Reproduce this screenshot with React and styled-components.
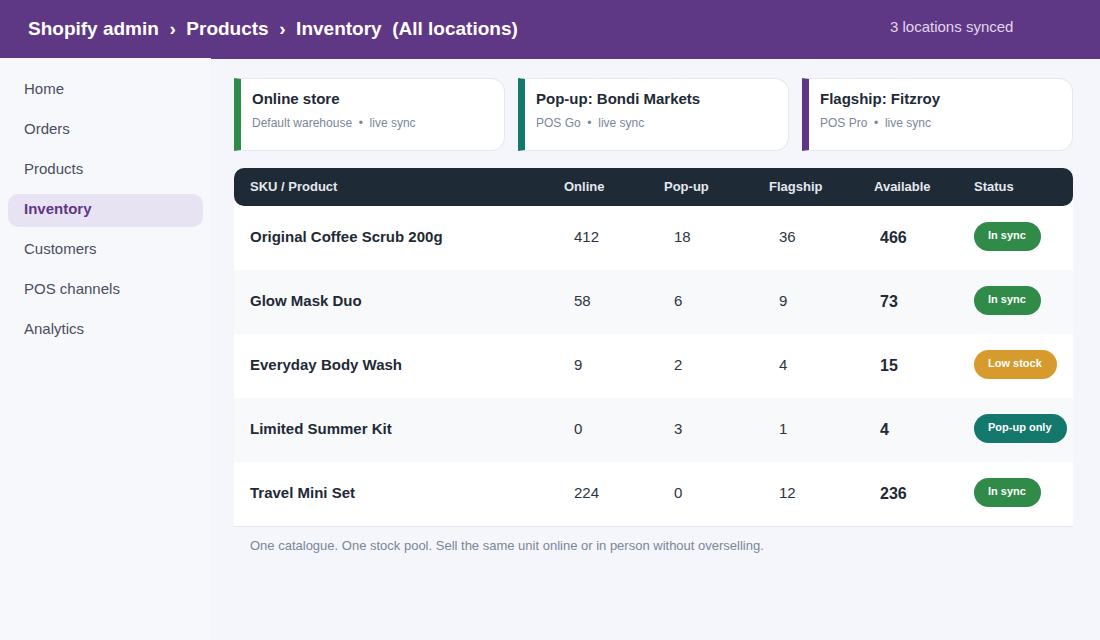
import React from 'react';
import styled, { createGlobalStyle } from 'styled-components';

const GlobalStyle = createGlobalStyle`
  html, body {
    margin: 0;
    padding: 0;
    background: #f4f6fb;
    font-family: "Liberation Sans", Arial, sans-serif;
  }
  * { box-sizing: border-box; }
`;

const Page = styled.div`
  width: 1100px;
  height: 640px;
  overflow: hidden;
  display: flex;
  flex-direction: column;
  background: #f4f6fb;
`;

const TopBar = styled.header`
  flex: 0 0 59px;
  display: flex;
  align-items: center;
  background: #5f3885;
  color: #fff;
  padding: 0 0 2px 28px;
`;

const Crumbs = styled.div`
  width: 862px;
  font-size: 19px;
  font-weight: 700;
  white-space: pre;
`;

const SyncNote = styled.div`
  font-size: 15px;
  color: #e0d6ec;
  margin-bottom: 5px;
`;

const Body = styled.div`
  flex: 1;
  display: flex;
  min-height: 0;
`;

const Sidebar = styled.nav`
  flex: 0 0 211px;
  margin-top: -1px;
  padding: 16px 8px 0;
  background: #f7f8fb;
  display: flex;
  flex-direction: column;
  gap: 7px;
`;

const NavItem = styled.div`
  height: 33px;
  line-height: 30px;
  padding-left: 16px;
  border-radius: 10px;
  font-size: 15px;
  font-weight: ${p => (p.$active ? 700 : 400)};
  color: ${p => (p.$active ? '#5f3885' : '#4a4e5e')};
  background: ${p => (p.$active ? '#e8e3f2' : 'transparent')};
`;

const Main = styled.main`
  flex: 1;
  padding: 19px 27px 0 23px;
`;

const Cards = styled.div`
  display: grid;
  grid-template-columns: repeat(3, 271px);
  gap: 13px;
  margin-bottom: 17px;
`;

const Card = styled.div`
  height: 73px;
  padding: 11px 11px 0 11px;
  background: #fff;
  border: 1px solid #e4e7ee;
  border-left: 7px solid ${p => p.$accent};
  border-radius: 0 14px 14px 0;
`;

const CardTitle = styled.div`
  font-size: 15px;
  font-weight: 700;
  line-height: 17px;
  color: #1e2a36;
`;

const CardSub = styled.div`
  margin-top: 8px;
  font-size: 12px;
  line-height: 16px;
  color: #7a8699;
  white-space: pre;
`;

const columns = '314px 100px 105px 105px 100px 1fr';

const Table = styled.div`
  background: #fff;
  border-radius: 10px 10px 0 0;
  border-bottom: 1px solid #e4e7ee;
`;

const TableHead = styled.div`
  display: grid;
  grid-template-columns: ${columns};
  align-items: center;
  height: 38px;
  padding: 0 0 2px 16px;
  background: #1e2a36;
  border-radius: 10px;
  font-size: 13px;
  font-weight: 700;
  color: #e4e8ef;
`;

const Row = styled.div`
  display: grid;
  grid-template-columns: ${columns};
  align-items: center;
  height: 64px;
  padding-left: 16px;
  background: ${p => (p.$striped ? '#f8f9fb' : '#fff')};
`;

const ProductName = styled.div`
  font-size: 15px;
  font-weight: 700;
  line-height: 17px;
  padding-bottom: 4px;
  color: #1e2a36;
`;

const Qty = styled.div`
  font-size: 15px;
  line-height: 17px;
  padding-bottom: 4px;
  color: #2b3440;
  padding-left: 10px;
`;

const Total = styled.div`
  font-size: 16px;
  font-weight: 700;
  color: #1e2a36;
  padding-left: 6px;
`;

const Badge = styled.span`
  justify-self: start;
  height: 29px;
  line-height: 27px;
  margin-top: -3px;
  padding: 0 15px 0 14px;
  border-radius: 15px;
  font-size: 11px;
  font-weight: 700;
  color: #fff;
  white-space: nowrap;
  background: ${p => p.$color};
`;

const Footnote = styled.p`
  margin: 11px 0 0 16px;
  font-size: 13px;
  color: #7a8699;
`;

const GREEN = '#2f8b47';
const TEAL = '#14786c';
const AMBER = '#d69a2d';
const PURPLE = '#5f3885';

const nav = ['Home', 'Orders', 'Products', 'Inventory', 'Customers', 'POS channels', 'Analytics'];

const locations = [
  { title: 'Online store', sub: 'Default warehouse  •  live sync', accent: GREEN },
  { title: 'Pop-up: Bondi Markets', sub: 'POS Go  •  live sync', accent: TEAL },
  { title: 'Flagship: Fitzroy', sub: 'POS Pro  •  live sync', accent: PURPLE },
];

const products = [
  { name: 'Original Coffee Scrub 200g', online: 412, popup: 18, flagship: 36, total: 466, status: 'In sync', color: GREEN },
  { name: 'Glow Mask Duo', online: 58, popup: 6, flagship: 9, total: 73, status: 'In sync', color: GREEN },
  { name: 'Everyday Body Wash', online: 9, popup: 2, flagship: 4, total: 15, status: 'Low stock', color: AMBER },
  { name: 'Limited Summer Kit', online: 0, popup: 3, flagship: 1, total: 4, status: 'Pop-up only', color: TEAL },
  { name: 'Travel Mini Set', online: 224, popup: 0, flagship: 12, total: 236, status: 'In sync', color: GREEN },
];

export default function App() {
  return (
    <Page>
      <GlobalStyle />
      <TopBar>
        <Crumbs>{'Shopify admin  ›  Products  ›  Inventory  (All locations)'}</Crumbs>
        <SyncNote>3 locations synced</SyncNote>
      </TopBar>
      <Body>
        <Sidebar>
          {nav.map(item => (
            <NavItem key={item} $active={item === 'Inventory'}>{item}</NavItem>
          ))}
        </Sidebar>
        <Main>
          <Cards>
            {locations.map(loc => (
              <Card key={loc.title} $accent={loc.accent}>
                <CardTitle>{loc.title}</CardTitle>
                <CardSub>{loc.sub}</CardSub>
              </Card>
            ))}
          </Cards>
          <Table>
            <TableHead>
              <div>SKU / Product</div>
              <div>Online</div>
              <div>Pop-up</div>
              <div>Flagship</div>
              <div>Available</div>
              <div>Status</div>
            </TableHead>
            {products.map((p, i) => (
              <Row key={p.name} $striped={i % 2 === 1}>
                <ProductName>{p.name}</ProductName>
                <Qty>{p.online}</Qty>
                <Qty>{p.popup}</Qty>
                <Qty>{p.flagship}</Qty>
                <Total>{p.total}</Total>
                <Badge $color={p.color}>{p.status}</Badge>
              </Row>
            ))}
          </Table>
          <Footnote>One catalogue. One stock pool. Sell the same unit online or in person without overselling.</Footnote>
        </Main>
      </Body>
    </Page>
  );
}
